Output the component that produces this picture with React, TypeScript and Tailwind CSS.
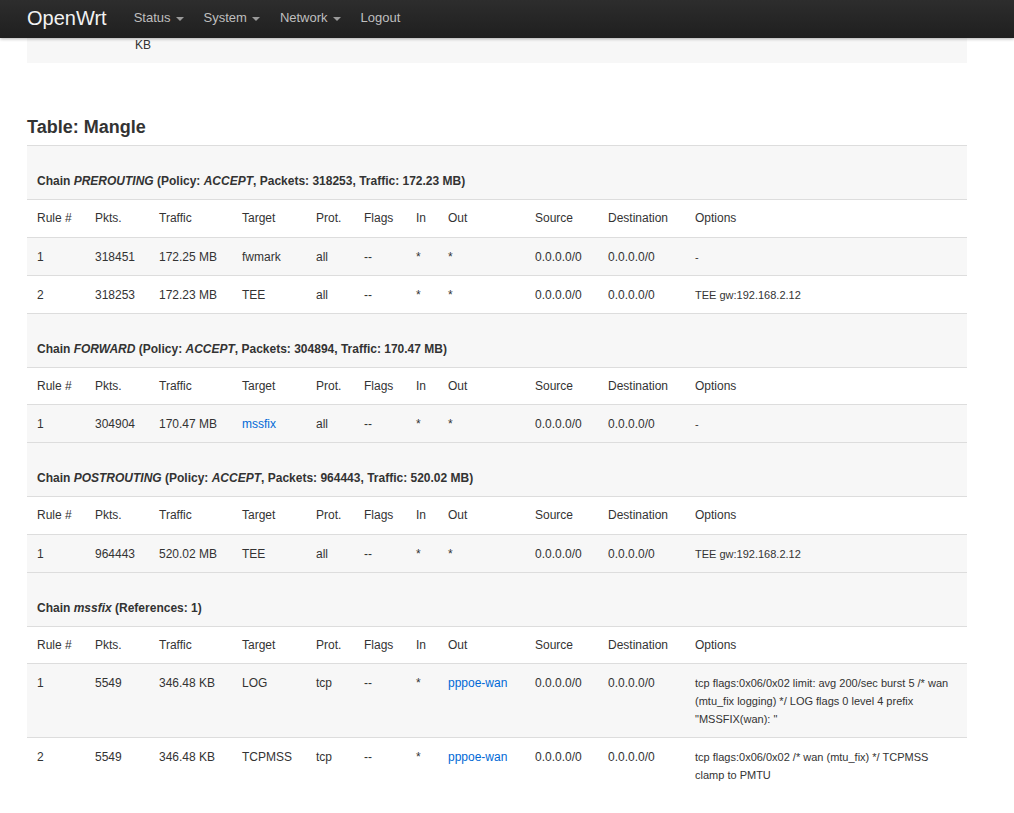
import React from 'react';

type Cell = string | { link: string };

interface Rule {
  cells: Cell[];
  options: string;
}

interface Chain {
  id: string;
  title: React.ReactNode;
  rules: Rule[];
}

const headers = ['Rule #', 'Pkts.', 'Traffic', 'Target', 'Prot.', 'Flags', 'In', 'Out', 'Source', 'Destination', 'Options'];
const widths = ['w-[58px]', 'w-[64px]', 'w-[83px]', 'w-[74px]', 'w-[48px]', 'w-[52px]', 'w-[32px]', 'w-[87px]', 'w-[73px]', 'w-[87px]', 'w-[282px]'];

const chains: Chain[] = [
  {
    id: 'PREROUTING',
    title: (
      <>
        Chain <em>PREROUTING</em> (Policy: <em>ACCEPT</em>, Packets: 318253, Traffic: 172.23 MB)
      </>
    ),
    rules: [
      { cells: ['1', '318451', '172.25 MB', 'fwmark', 'all', '--', '*', '*', '0.0.0.0/0', '0.0.0.0/0'], options: '-' },
      { cells: ['2', '318253', '172.23 MB', 'TEE', 'all', '--', '*', '*', '0.0.0.0/0', '0.0.0.0/0'], options: 'TEE gw:192.168.2.12' },
    ],
  },
  {
    id: 'FORWARD',
    title: (
      <>
        Chain <em>FORWARD</em> (Policy: <em>ACCEPT</em>, Packets: 304894, Traffic: 170.47 MB)
      </>
    ),
    rules: [
      { cells: ['1', '304904', '170.47 MB', { link: 'mssfix' }, 'all', '--', '*', '*', '0.0.0.0/0', '0.0.0.0/0'], options: '-' },
    ],
  },
  {
    id: 'POSTROUTING',
    title: (
      <>
        Chain <em>POSTROUTING</em> (Policy: <em>ACCEPT</em>, Packets: 964443, Traffic: 520.02 MB)
      </>
    ),
    rules: [
      { cells: ['1', '964443', '520.02 MB', 'TEE', 'all', '--', '*', '*', '0.0.0.0/0', '0.0.0.0/0'], options: 'TEE gw:192.168.2.12' },
    ],
  },
  {
    id: 'mssfix',
    title: (
      <>
        Chain <em>mssfix</em> (References: 1)
      </>
    ),
    rules: [
      {
        cells: ['1', '5549', '346.48 KB', 'LOG', 'tcp', '--', '*', { link: 'pppoe-wan' }, '0.0.0.0/0', '0.0.0.0/0'],
        options: 'tcp flags:0x06/0x02 limit: avg 200/sec burst 5 /* wan (mtu_fix logging) */ LOG flags 0 level 4 prefix "MSSFIX(wan): "',
      },
      {
        cells: ['2', '5549', '346.48 KB', 'TCPMSS', 'tcp', '--', '*', { link: 'pppoe-wan' }, '0.0.0.0/0', '0.0.0.0/0'],
        options: 'tcp flags:0x06/0x02 /* wan (mtu_fix) */ TCPMSS clamp to PMTU',
      },
    ],
  },
];

function Caret() {
  return (
    <span className="ml-[5px] inline-block h-0 w-0 border-x-[4px] border-t-[4px] border-x-transparent border-t-[#9a9a9a] align-middle" />
  );
}

function Navbar() {
  return (
    <div className="relative z-10 h-[38px] bg-gradient-to-b from-[#2d2d2d] to-[#1f1f1f] shadow-[0_1px_3px_rgba(0,0,0,0.3)]">
      <div className="flex h-[36px] items-center pl-[27px]">
        <span className="mr-[17px] text-[20px] leading-[36px] text-[#f2f2f2]">OpenWrt</span>
        {['Status', 'System', 'Network'].map(item => (
          <span key={item} className="px-[10px] text-[13px] leading-[36px] text-[#bfbfbf]">
            {item}
            <Caret />
          </span>
        ))}
        <span className="px-[10px] text-[13px] leading-[36px] text-[#bfbfbf]">Logout</span>
      </div>
    </div>
  );
}

function renderCell(cell: Cell) {
  if (typeof cell === 'string') return cell;
  return <span className="text-[#0069d6]">{cell.link}</span>;
}

export default function App() {
  return (
    <div className="min-h-[813px] bg-white text-[#333] [font-family:'Liberation_Sans',Arial,sans-serif]">
      <Navbar />
      <div className="pl-[27px]">
        <div className="w-[940px]">
          {/* tail of the previous table, scrolled under the bar */}
          <div className="h-[25px] bg-[#f7f7f7] pl-[108px] text-[12px] leading-[14px]">KB</div>

          <h3 className="mt-[46px] text-[18px] font-bold leading-[36px] text-[#333]">Table: Mangle</h3>

          <table className="w-[940px] table-fixed border-collapse text-left text-[12px]">
            <colgroup>
              {widths.map((w, i) => (
                <col key={i} className={w} />
              ))}
            </colgroup>
            <tbody>
              {chains.map(chain => (
                <React.Fragment key={chain.id}>
                  <tr className="border-t border-[#dddddd] bg-[#f7f7f7]">
                    <th colSpan={11} className="px-[10px] pt-[26px] pb-[9px] text-[12px] font-bold leading-[18px]">
                      {chain.title}
                    </th>
                  </tr>
                  <tr className="border-t border-[#dddddd] bg-white">
                    {headers.map(h => (
                      <td key={h} className="px-[10px] pt-[9px] pb-[9px] align-top leading-[18.5px]">
                        {h}
                      </td>
                    ))}
                  </tr>
                  {chain.rules.map((rule, ri) => (
                    <tr
                      key={ri}
                      className={`border-t border-[#dddddd] ${ri % 2 === 0 ? 'bg-[#f7f7f7]' : 'bg-white'}`}
                    >
                      {rule.cells.map((cell, ci) => (
                        <td key={ci} className="px-[10px] pt-[10px] pb-[9px] align-top leading-[18px]">
                          {renderCell(cell)}
                        </td>
                      ))}
                      <td className="px-[10px] pt-[10px] pb-[9px] align-top text-[11px] leading-[18px]">
                        {rule.options}
                      </td>
                    </tr>
                  ))}
                </React.Fragment>
              ))}
            </tbody>
          </table>
        </div>
      </div>
    </div>
  );
}
